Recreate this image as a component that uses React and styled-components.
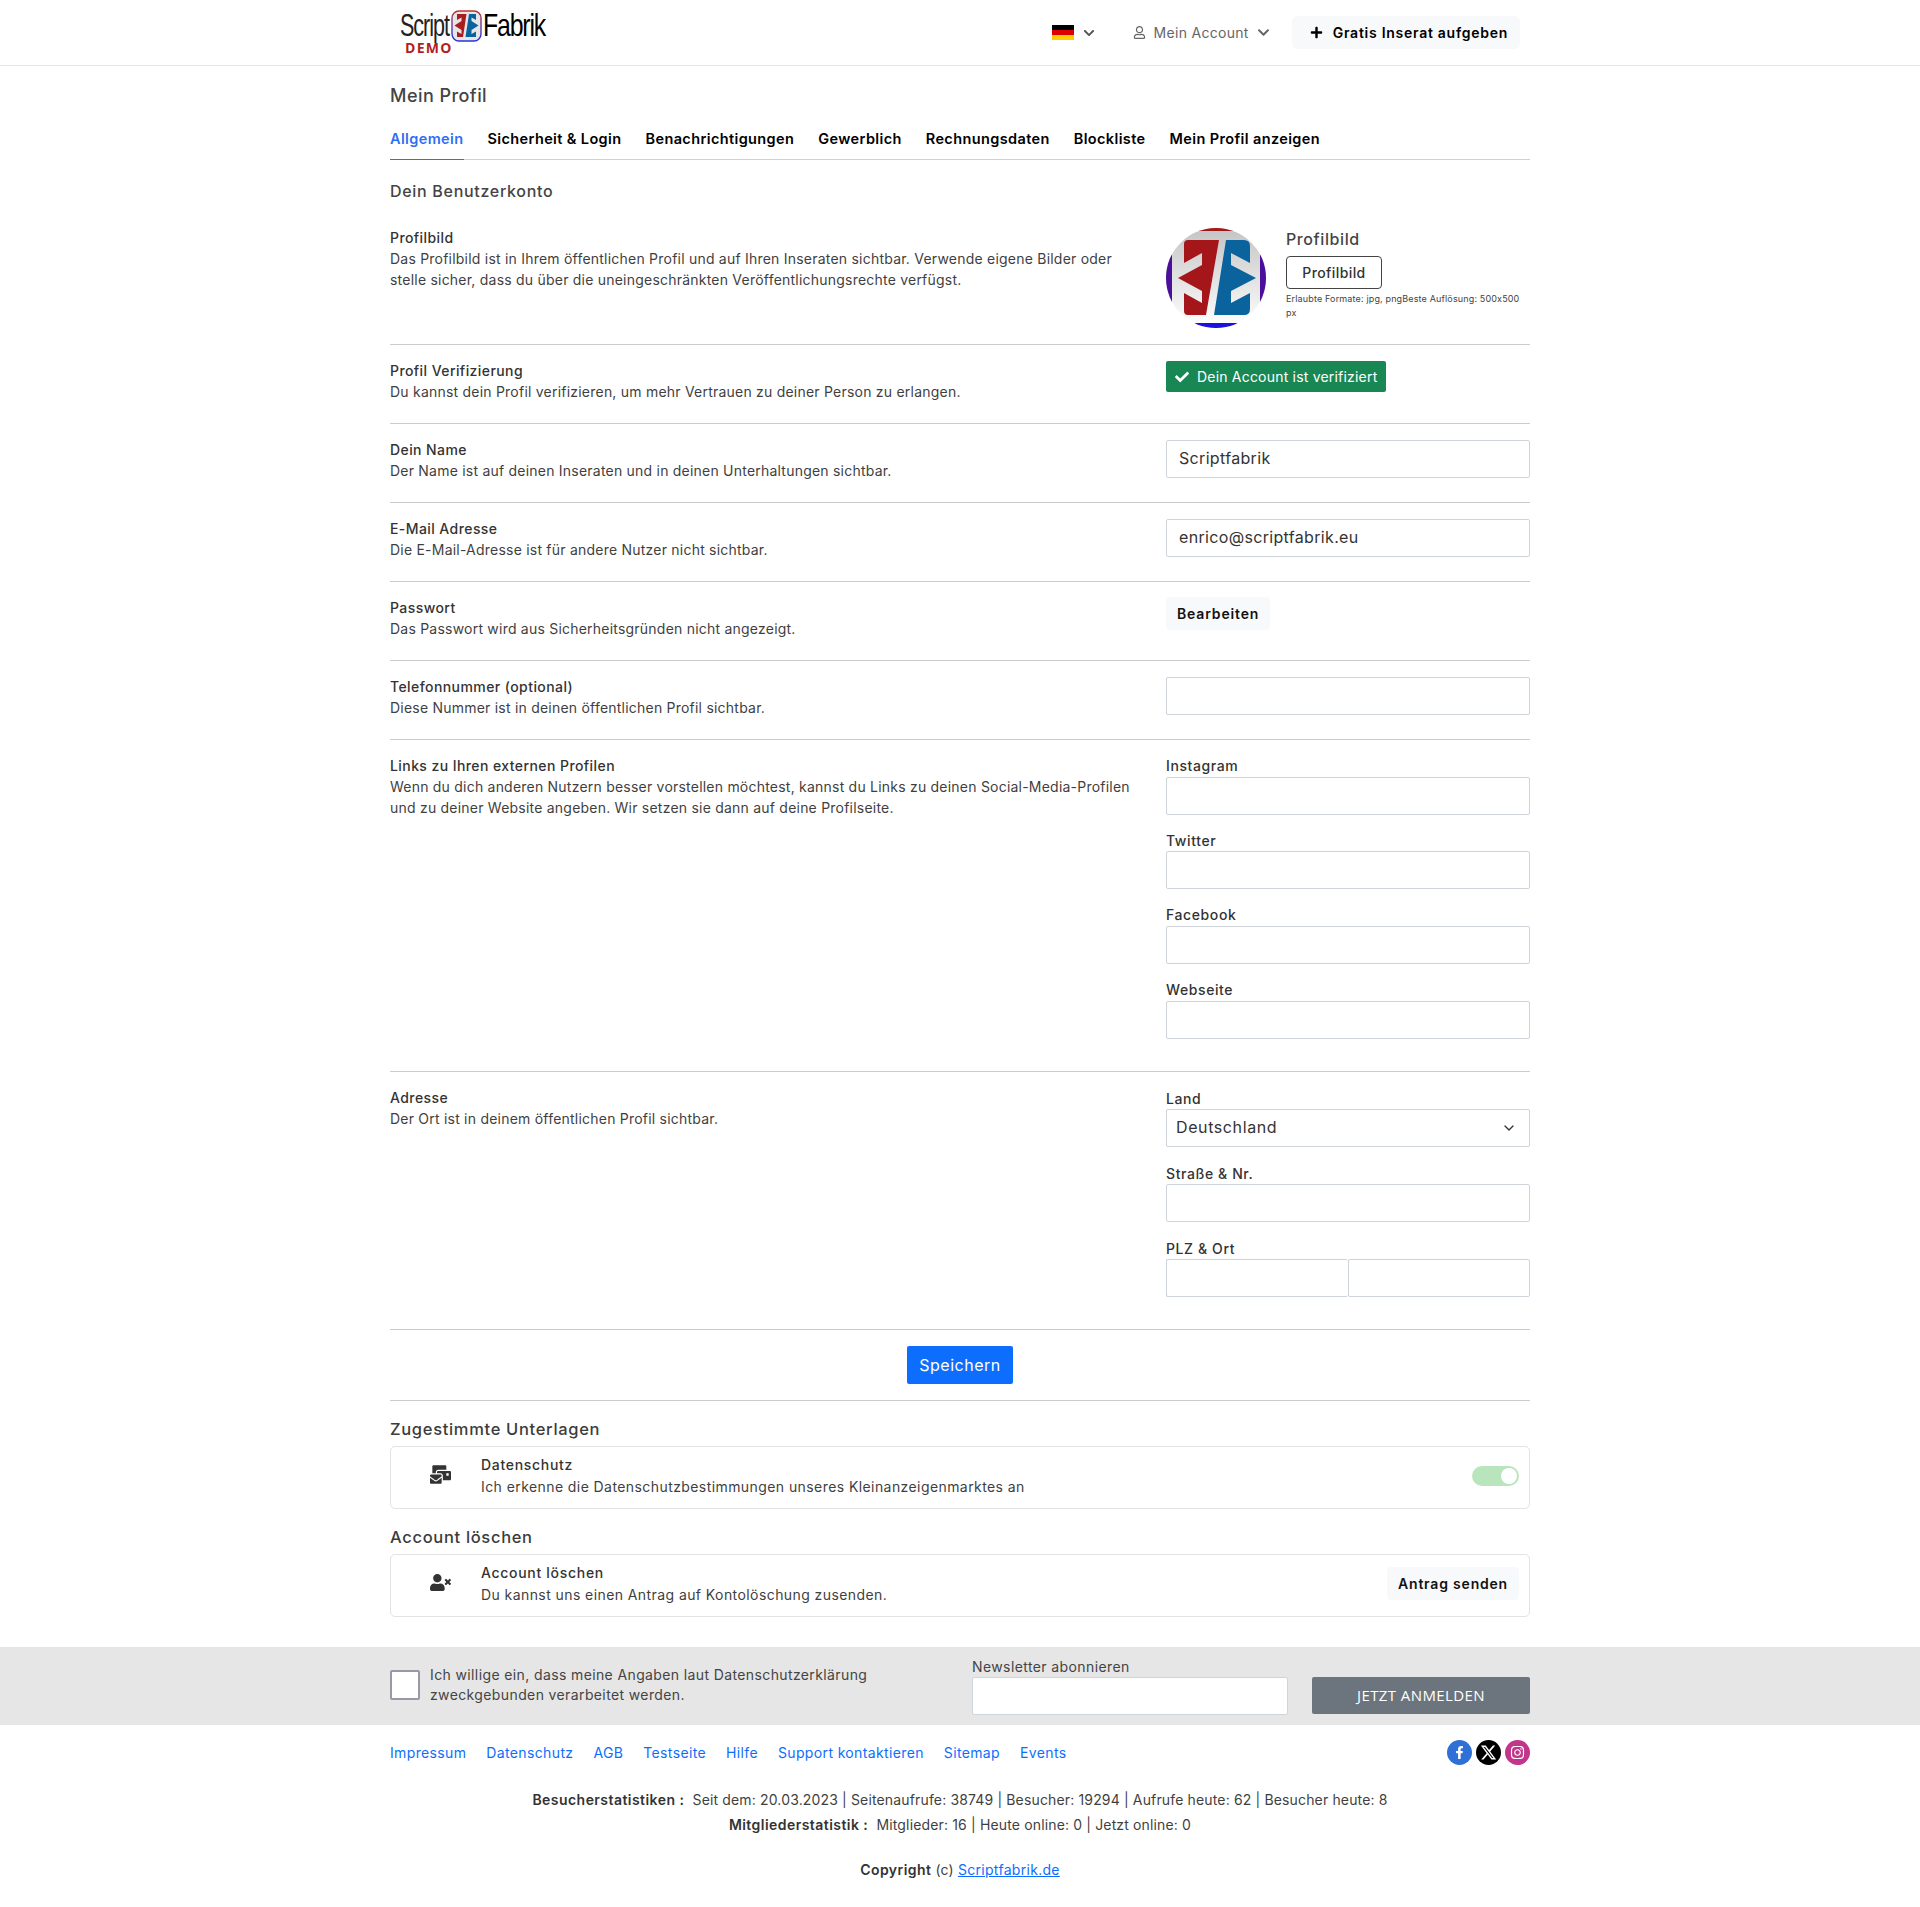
import React from "react";
import styled, { createGlobalStyle } from "styled-components";
import { FaCheck, FaPlus, FaMailBulk, FaUserTimes, FaChevronDown, FaFacebookF, FaInstagram, FaRegUser } from "react-icons/fa";
import { FaXTwitter } from "react-icons/fa6";
import { LuChevronDown } from "react-icons/lu";

const Global = createGlobalStyle`
  * { box-sizing: border-box; }
  html, body { margin: 0; padding: 0; background: #fff; }
  body { font-family: Inter, "Noto Sans", sans-serif; font-size: 14px; line-height: 21px; color: #3a3a3a; }
`;
const Page = styled.div`width: 1920px; min-height: 1907px;`;
const Header = styled.header`height: 66px; border-bottom: 1px solid #e6e6e6;`;
const HeaderInner = styled.div`width: 1140px; height: 65px; margin: 0 auto; display: flex; align-items: center; justify-content: space-between; padding: 0 10px;`;
const Logo = styled.div`position: relative; width: 146px; height: 54px; display: flex; align-items: flex-start; padding-top: 4.5px;`;
const LogoWord = styled.span`font-family: "Liberation Sans", sans-serif; font-size: 32px; line-height: 30px; height: 30px; letter-spacing: -1.5px; color: ${p => p.$c}; display: inline-block; transform: scaleX(${p => p.$s}); transform-origin: left; width: ${p => p.$w}px; white-space: nowrap; margin-left: ${p => p.$ml || 0}px;`;
const LogoDemo = styled.span`position: absolute; left: 5px; top: 34px; font: 700 14px/15px "Open Sans", sans-serif; letter-spacing: 1.3px; color: #b11f24;`;
const HeaderRight = styled.div`display: flex; align-items: center;`;
const FlagBox = styled.div`display: flex; align-items: center; gap: 9px; color: #555; margin-right: 38px;`;
const Flag = styled.div`width: 22px; height: 15px; background: linear-gradient(#000 0 33%, #d00 33% 66%, #ffce00 66%);`;
const AccountMenu = styled.div`display: flex; align-items: center; gap: 8px; color: #666; font-size: 14px; letter-spacing: .3px; margin-right: 22px;`;
const PostBtn = styled.button`height: 33px; border: 0; border-radius: 6px; background: #f8f9fa; font: 600 14px Inter, sans-serif; letter-spacing: .73px; color: #000; display: flex; align-items: center; gap: 10px; padding: 0 12px 0 18px;`;

const Main = styled.main`width: 1140px; margin: 0 auto;`;
const Title = styled.h1`margin: 0; padding-top: 16px; font-size: 18px; line-height: 27px; font-weight: 500; letter-spacing: .45px; color: #444;`;
const Tabs = styled.nav`display: flex; gap: 24px; margin-top: 17px; border-bottom: 1px solid #ccd0d8; height: 34px;`;
const Tab = styled.a`font-size: 14.5px; line-height: 22px; padding-top: 2px; font-weight: 600; letter-spacing: .38px; height: 34px; color: ${p => p.$active ? "#2f6ff5" : "#000"}; border-bottom: ${p => p.$active ? "1px solid #2f6ff5" : "0"}; white-space: nowrap;`;
const SectionHead = styled.h2`margin: 0; padding-top: 19px; font-size: 16px; line-height: 24px; font-weight: 500; letter-spacing: .7px; color: #444;`;
const Row = styled.section`display: grid; grid-template-columns: 776px 364px; padding: 16px 0; min-height: 79px; border-bottom: ${p => p.$last ? "0" : "1px solid #ccc"};`;
const RowLeft = styled.div`margin-top: -1px; padding: ${p => p.$pt || 0}px 24px 0 0;`;
const RowTitle = styled.div`font-weight: 500; color: #333; font-size: 14px; letter-spacing: .42px;`;
const RowText = styled.div`color: #3f3f3f; font-size: 14px; letter-spacing: .22px; line-height: 21px;`;
const CardTitle = styled(RowTitle)`letter-spacing: .7px;`;
const CardText = styled(RowText)`letter-spacing: .42px; margin-top: 1px;`;
const Avatar = styled.div`width: 100px; height: 100px; border-radius: 50%; overflow: hidden; flex: none;`;
const PicWrap = styled.div`display: flex; gap: 20px; padding-top: 9px;`;
const PicInfo = styled.div`flex: 1; margin-top: -1px;`;
const PicTitle = styled.div`font-size: 16px; line-height: 24px; font-weight: 500; letter-spacing: .6px; color: #444;`;
const OutlineBtn = styled.button`display: block; width: 96px; height: 33px; margin-top: 5px; border: 1px solid #444; border-radius: 4px; background: #fff; font: 500 14px Inter, sans-serif; letter-spacing: .4px; color: #333;`;
const Hint = styled.div`font-size: 9px; line-height: 14px; letter-spacing: .15px; color: #444; margin-top: 3px; width: 238px;`;
const Verified = styled.div`display: inline-flex; align-items: center; gap: 8px; height: 31px; padding: 0 9px; background: #198754; border-radius: 2px; color: #fff; font-size: 14px; letter-spacing: .2px;`;
const Input = styled.input`display: block; width: 100%; height: 38px; border: 1px solid #ced4da; border-radius: 2px; padding: 0 12px 2px; font: 16px/24px Inter, sans-serif; letter-spacing: .33px; color: #333; background: #fff; margin-bottom: ${p => p.$mb ?? 8}px;`;
const Field = styled.div`margin-bottom: 16px;`;
const Label = styled.div`font-size: 14px; line-height: ${p => p.$lh || 20.7}px; font-weight: 500; letter-spacing: .6px; color: #333;`;
const SelectBox = styled.div`height: 38px; border: 1px solid #ced4da; border-radius: 2px; padding: 0 12px 0 9px; display: flex; align-items: center; justify-content: space-between; font-size: 16px; letter-spacing: .6px; color: #333;`;
const Pair = styled.div`display: flex;`;
const PairInput = styled(Input)`width: 50%; margin: 0; &:first-child { border-right: 0; }`;
const ButtonCell = styled.div`margin-top: -1px;`;
const GhostBtn = styled.button`height: 33px; padding: 0 11px; border: 0; border-radius: 4px; background: #f8f9fa; font: 600 14px Inter, sans-serif; letter-spacing: .85px; color: #111;`;
const SaveRow = styled.div`display: flex; justify-content: center; padding: 16px 0; border-bottom: 1px solid #ccc; border-top: 1px solid #ccc;`;
const SaveBtn = styled.button`width: 106px; height: 38px; border: 0; border-radius: 2px; background: #0d6efd; color: #fff; font: 16px Inter, sans-serif; letter-spacing: .5px;`;
const SubHead = styled.h2`margin: 0; padding-top: 16px; font-size: 16.5px; line-height: 24px; font-weight: 500; letter-spacing: .68px; color: #3c3c3c;`;
const Card = styled.div`height: 63px; margin-top: 5px; border: 1px solid #e1e3e6; border-radius: 5px; display: flex; align-items: center; padding: 0 10px 0 0;`;
const CardIcon = styled.div`width: 90px; display: flex; justify-content: center; padding-left: 8px; color: #333; font-size: 21px; margin-top: -6px;`;
const CardBody = styled.div`flex: 1; padding-bottom: 4px;`;
const CardBtn = styled(GhostBtn)`margin-top: -3px; letter-spacing: .8px;`;
const Toggle = styled.div`width: 47px; height: 20px; border-radius: 10px; background: #b9e5bd; position: relative; display: flex; align-items: center; justify-content: flex-end; padding-right: 2px; margin-top: -3px;`;
const Knob = styled.span`width: 16px; height: 16px; border-radius: 50%; background: #fff;`;
const Band = styled.div`margin-top: 30px; height: 78px; background: #e6e6e6;`;
const BandInner = styled.div`width: 1140px; height: 78px; margin: 0 auto; display: flex; align-items: flex-start;`;
const Consent = styled.div`width: 582px; display: flex; gap: 10px; padding-top: 18px;`;
const Check = styled.div`width: 30px; height: 30px; margin-top: 5px; border: 2px solid #9a97a8; border-radius: 2px; background: #fff; flex: none;`;
const ConsentText = styled.div`font-size: 14px; line-height: 20px; letter-spacing: .38px; color: #444;`;
const News = styled.div`width: 316px; padding-top: 9px;`;
const NewsLabel = styled.div`font-size: 14px; line-height: 21px; letter-spacing: .4px; color: #444;`;
const NewsInput = styled.input`width: 316px; height: 38px; border: 1px solid #ced4da; border-radius: 2px; background: #fff; display: block;`;
const Join = styled.button`width: 218px; height: 37px; margin: 30px 0 0 24px; border: 0; border-radius: 2px; background: #6c757d; color: #fff; font: 15px "Open Sans", sans-serif; letter-spacing: .4px;`;
const Footer = styled.footer`width: 1140px; margin: 0 auto;`;
const FootLinks = styled.div`display: flex; align-items: center; justify-content: space-between; height: 56px;`;
const LinkList = styled.div`display: flex; gap: 20px;`;
const FootLink = styled.a`color: #0d6efd; font-size: 14px; letter-spacing: .36px;`;
const Socials = styled.div`display: flex; gap: 4px;`;
const Social = styled.span`width: 25px; height: 25px; border-radius: 50%; background: ${p => p.$bg}; color: #fff; display: flex; align-items: center; justify-content: center; font-size: 14px;`;
const Stat = styled.div`text-align: center; font-size: 14px; line-height: 25px; letter-spacing: .15px; color: #3f3f3f; margin-top: ${p => p.$mt || 0}px;`;
const Strong = styled.b`font-weight: 600; color: #333; letter-spacing: .45px;`;
const SiteLink = styled.a`color: #0d6efd; text-decoration: underline; letter-spacing: .3px;`;

const AvatarArt = () => (
  <svg width="100" height="100" viewBox="0 0 100 100">
    <defs><linearGradient id="bg" x1="0" y1="0" x2="0" y2="1"><stop offset="0" stopColor="#c4c4c4"/><stop offset="1" stopColor="#fff"/></linearGradient></defs>
    <rect width="100" height="100" fill="url(#bg)"/>
    <rect x="0" y="25" width="6" height="55" fill="#4b0f9b"/><rect x="94" y="25" width="6" height="55" fill="#4b0f9b"/>
    <rect x="0" y="0" width="100" height="3" fill="#a5161b"/><rect x="0" y="95" width="100" height="5" fill="#1a10e0"/>
    <path d="M22 12H53L40 87H22Q18 87 18 83V65L36 75V63L12 50L36 37V25L18 35V16Q18 12 22 12Z" fill="#a5161b"/>
    <path d="M60 12H78Q84 12 84 18V35L65 25V37L90 50L65 63V75L84 65V81Q84 87 78 87H48Z" fill="#0b639d"/>
  </svg>
);
const LogoMark = () => (
  <svg width="31" height="32" viewBox="0 0 31 32" style={{ flex: "none" }}>
    <defs><linearGradient id="mk" x1="0" y1="0" x2="0" y2="1"><stop offset="0" stopColor="#b33"/><stop offset=".5" stopColor="#6a3aa0"/><stop offset="1" stopColor="#2a2fe0"/></linearGradient></defs>
    <rect x="1" y="1" width="29" height="30" rx="7" fill="#e6e6e6" stroke="url(#mk)" strokeWidth="1.4"/>
    <path d="M6 4H15.5L12 27H6V21.5L10.5 24V20L3.5 15.5L10.5 11V7.5L6 10Z" fill="#aa1c1f"/>
    <path d="M18 4H25V10L20.5 7.5V11L27.5 15.5L20.5 20V24L25 21.5V27H14.5Z" fill="#0b639d"/>
  </svg>
);

const Text = ({ title, pt, children }) => (<RowLeft $pt={pt}><RowTitle>{title}</RowTitle><RowText>{children}</RowText></RowLeft>);
const LabeledInput = ({ label, lh }) => (<Field><Label $lh={lh}>{label}</Label><Input $mb={0} /></Field>);

export default function App() {
  return (
    <Page>
      <Global />
      <Header>
        <HeaderInner>
          <Logo>
            <LogoWord $c="#222" $s=".673" $w="51">Script</LogoWord>
            <LogoMark />
            <LogoWord $c="#000" $s=".776" $w="62" $ml="1">Fabrik</LogoWord>
            <LogoDemo>DEMO</LogoDemo>
          </Logo>
          <HeaderRight>
            <FlagBox><Flag /><FaChevronDown size={12} /></FlagBox>
            <AccountMenu><FaRegUser size={13} /><span>Mein Account</span><FaChevronDown size={13} /></AccountMenu>
            <PostBtn><FaPlus size={13} />Gratis Inserat aufgeben</PostBtn>
          </HeaderRight>
        </HeaderInner>
      </Header>
      <Main>
        <Title>Mein Profil</Title>
        <Tabs>
          <Tab $active>Allgemein</Tab>
          <Tab>Sicherheit &amp; Login</Tab>
          <Tab>Benachrichtigungen</Tab>
          <Tab>Gewerblich</Tab>
          <Tab>Rechnungsdaten</Tab>
          <Tab>Blockliste</Tab>
          <Tab>Mein Profil anzeigen</Tab>
        </Tabs>
        <SectionHead>Dein Benutzerkonto</SectionHead>
        <Row>
          <Text title="Profilbild" pt={9}>Das Profilbild ist in Ihrem öffentlichen Profil und auf Ihren Inseraten sichtbar. Verwende eigene Bilder oder stelle sicher, dass du über die uneingeschränkten Veröffentlichungsrechte verfügst.</Text>
          <PicWrap>
            <Avatar><AvatarArt /></Avatar>
            <PicInfo>
              <PicTitle>Profilbild</PicTitle>
              <OutlineBtn>Profilbild</OutlineBtn>
              <Hint>Erlaubte Formate: jpg, pngBeste Auflösung: 500x500 px</Hint>
            </PicInfo>
          </PicWrap>
        </Row>
        <Row>
          <Text title="Profil Verifizierung">Du kannst dein Profil verifizieren, um mehr Vertrauen zu deiner Person zu erlangen.</Text>
          <div><Verified><FaCheck size={14} />Dein Account ist verifiziert</Verified></div>
        </Row>
        <Row>
          <Text title="Dein Name">Der Name ist auf deinen Inseraten und in deinen Unterhaltungen sichtbar.</Text>
          <Input defaultValue="Scriptfabrik" />
        </Row>
        <Row>
          <Text title="E-Mail Adresse">Die E-Mail-Adresse ist für andere Nutzer nicht sichtbar.</Text>
          <Input defaultValue="enrico@scriptfabrik.eu" />
        </Row>
        <Row>
          <Text title="Passwort">Das Passwort wird aus Sicherheitsgründen nicht angezeigt.</Text>
          <ButtonCell><GhostBtn>Bearbeiten</GhostBtn></ButtonCell>
        </Row>
        <Row>
          <Text title="Telefonnummer (optional)">Diese Nummer ist in deinen öffentlichen Profil sichtbar.</Text>
          <Input />
        </Row>
        <Row>
          <Text title="Links zu Ihren externen Profilen">Wenn du dich anderen Nutzern besser vorstellen möchtest, kannst du Links zu deinen Social-Media-Profilen und zu deiner Website angeben. Wir setzen sie dann auf deine Profilseite.</Text>
          <div>
            <LabeledInput label="Instagram" />
            <LabeledInput label="Twitter" />
            <LabeledInput label="Facebook" />
            <LabeledInput label="Webseite" />
          </div>
        </Row>
        <Row $last>
          <Text title="Adresse">Der Ort ist in deinem öffentlichen Profil sichtbar.</Text>
          <div>
            <Field><Label $lh={21}>Land</Label><SelectBox>Deutschland<LuChevronDown size={16} /></SelectBox></Field>
            <LabeledInput label="Straße & Nr." lh={21} />
            <Field><Label $lh={21}>PLZ &amp; Ort</Label><Pair><PairInput /><PairInput /></Pair></Field>
          </div>
        </Row>
        <SaveRow><SaveBtn>Speichern</SaveBtn></SaveRow>
        <SubHead>Zugestimmte Unterlagen</SubHead>
        <Card>
          <CardIcon><FaMailBulk /></CardIcon>
          <CardBody><CardTitle>Datenschutz</CardTitle><CardText>Ich erkenne die Datenschutzbestimmungen unseres Kleinanzeigenmarktes an</CardText></CardBody>
          <Toggle><Knob /></Toggle>
        </Card>
        <SubHead>Account löschen</SubHead>
        <Card>
          <CardIcon><FaUserTimes /></CardIcon>
          <CardBody><CardTitle>Account löschen</CardTitle><CardText>Du kannst uns einen Antrag auf Kontolöschung zusenden.</CardText></CardBody>
          <CardBtn>Antrag senden</CardBtn>
        </Card>
      </Main>
      <Band>
        <BandInner>
          <Consent><Check /><ConsentText>Ich willige ein, dass meine Angaben laut Datenschutzerklärung<br />zweckgebunden verarbeitet werden.</ConsentText></Consent>
          <News><NewsLabel>Newsletter abonnieren</NewsLabel><NewsInput /></News>
          <Join>JETZT ANMELDEN</Join>
        </BandInner>
      </Band>
      <Footer>
        <FootLinks>
          <LinkList>
            {["Impressum","Datenschutz","AGB","Testseite","Hilfe","Support kontaktieren","Sitemap","Events"].map(t => <FootLink key={t}>{t}</FootLink>)}
          </LinkList>
          <Socials>
            <Social $bg="#2e6fd8"><FaFacebookF size={13} /></Social>
            <Social $bg="#000"><FaXTwitter size={17} /></Social>
            <Social $bg="#c1358b"><FaInstagram size={15} /></Social>
          </Socials>
        </FootLinks>
        <Stat $mt={6}><Strong>Besucherstatistiken :</Strong>&nbsp; Seit dem: 20.03.2023 | Seitenaufrufe: 38749 | Besucher: 19294 | Aufrufe heute: 62 | Besucher heute: 8</Stat>
        <Stat><Strong>Mitgliederstatistik :</Strong>&nbsp; Mitglieder: 16 | Heute online: 0 | Jetzt online: 0</Stat>
        <Stat $mt={20}><Strong>Copyright</Strong> (c) <SiteLink>Scriptfabrik.de</SiteLink></Stat>
      </Footer>
    </Page>
  );
}
